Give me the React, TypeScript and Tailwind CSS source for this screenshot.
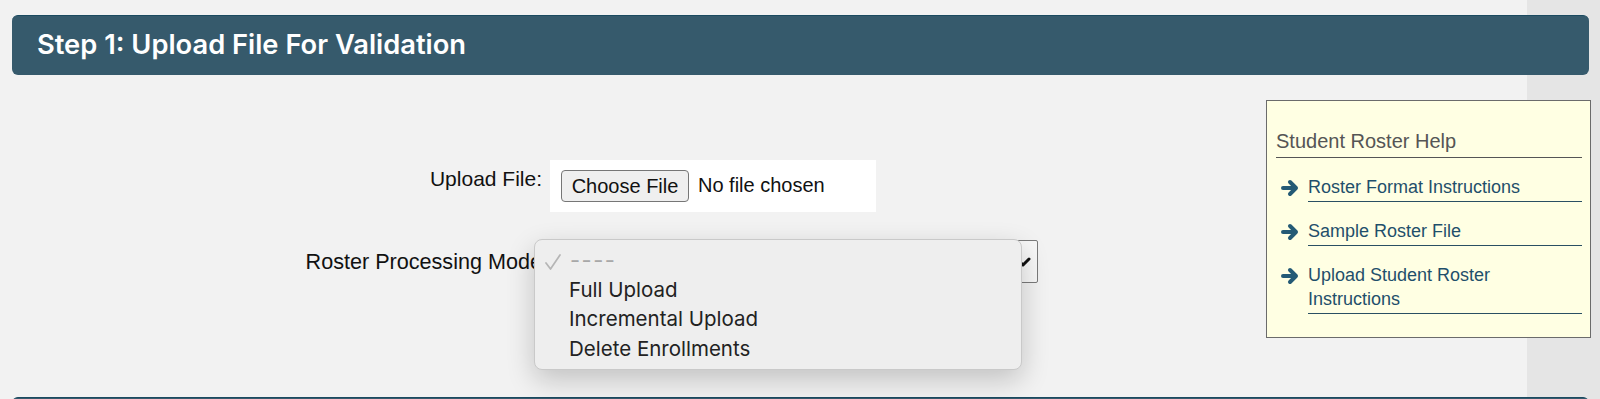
const helpLinks = [
  "Roster Format Instructions",
  "Sample Roster File",
  "Upload Student Roster Instructions",
];

const modes = ["Full Upload", "Incremental Upload", "Delete Enrollments"];

function StepHeader({ title }: { title?: string }) {
  return (
    <div className="mr-[11px] flex h-[60px] items-center rounded-[6px] border-t border-[#1b4a60] bg-[#365a6c] pl-[25px]">
      {title && <h2 className="font-['Inter',sans-serif] text-[27.3px] font-semibold text-white">{title}</h2>}
    </div>
  );
}

function Arrow() {
  return (
    <svg width="20" height="18" viewBox="0 0 20 18" fill="none" className="ml-[4px] mr-[8px] mt-[4px] shrink-0">
      <path d="M3 9h13M10 3l6 6-6 6" stroke="#245a75" strokeWidth="4" strokeLinecap="round" strokeLinejoin="round" />
    </svg>
  );
}

function ModeSelect() {
  return (
    <div className="relative flex h-[43px] w-[488px] items-center justify-end rounded-[2px] border border-[#7a7a7a] bg-[#f7f7f7] pr-[6px]">
      <svg width="16" height="10" viewBox="0 0 16 10" fill="none">
        <path d="M2 2l6 6 6-6" stroke="#111" strokeWidth="3" strokeLinecap="round" strokeLinejoin="round" />
      </svg>

      {/* open native menu */}
      <div className="absolute left-[-17px] top-[-2px] z-10 h-[131px] w-[488px] rounded-[8px] border border-[#c9c9c9] bg-[#eeeeee] pt-[6px] font-['Inter',sans-serif] text-[20.5px] text-[#222] shadow-[0_10px_28px_rgba(0,0,0,0.2)]">
        <div className="flex h-[29.5px] items-center">
          <svg width="18" height="18" viewBox="0 0 18 18" fill="none" className="ml-[9px] mr-[8px] mt-[2px]">
            <path d="M2 10l4.5 6L16 2" stroke="#b5b5b5" strokeWidth="1.7" strokeLinecap="round" strokeLinejoin="round" />
          </svg>
          <span className="text-[22px] tracking-[1.5px] text-[#a8a8a8]">----</span>
        </div>
        {modes.map((m) => (
          <div key={m} className="flex h-[29.5px] items-center pl-[34px]">
            {m}
          </div>
        ))}
      </div>
    </div>
  );
}

function HelpBox() {
  return (
    <div className="mr-[9px] mt-[25px] h-[238px] w-[325px] shrink-0 border border-[#6b6b6b] bg-[#ffffe3] pl-[9px] pr-[8px] pt-[28px]">
      <h3 className="border-b border-[#555] pb-[4px] text-[20px] leading-[24px] text-[#555]">Student Roster Help</h3>
      <ul className="mt-[17px] flex flex-col gap-[17px]">
        {helpLinks.map((l) => (
          <li key={l} className="flex items-start">
            <Arrow />
            <a className="flex-1 border-b border-[#2a4f63] pb-[2px] text-[18px] leading-[24px] text-[#1f4f6b]">{l}</a>
          </li>
        ))}
      </ul>
    </div>
  );
}

export default function App() {
  return (
    <div className="h-[399px] w-[1600px] overflow-hidden bg-[linear-gradient(to_right,#f2f2f2_1527px,#e5e5e5_1527px)] pl-[12px] pt-[15px] font-['Liberation_Sans',Arial,sans-serif] text-[#111]">
      <StepHeader title="Step 1: Upload File For Validation" />

      <div className="flex">
        <div className="mt-[85px] grid flex-1 grid-cols-[530px_auto] content-start gap-x-[8px] gap-y-[28px] text-[21px]">
          <label className="pt-[7px] text-right leading-[24px]">Upload File:</label>
          <div className="flex h-[52px] w-[326px] items-start bg-white pl-[11px] pt-[10px] text-[20px]">
            <button className="h-[32px] w-[128px] rounded-[4px] border border-[#767676] bg-[#efefef] text-[20px] leading-none">
              Choose File
            </button>
            <span className="ml-[9px] mt-[3px] leading-[24px]">No file chosen</span>
          </div>

          <label className="self-center text-right text-[21.6px] leading-[24px]">Roster Processing Mode</label>
          <ModeSelect />
        </div>

        <HelpBox />
      </div>

      <div className="mt-[59px]">
        <StepHeader />
      </div>
    </div>
  );
}
